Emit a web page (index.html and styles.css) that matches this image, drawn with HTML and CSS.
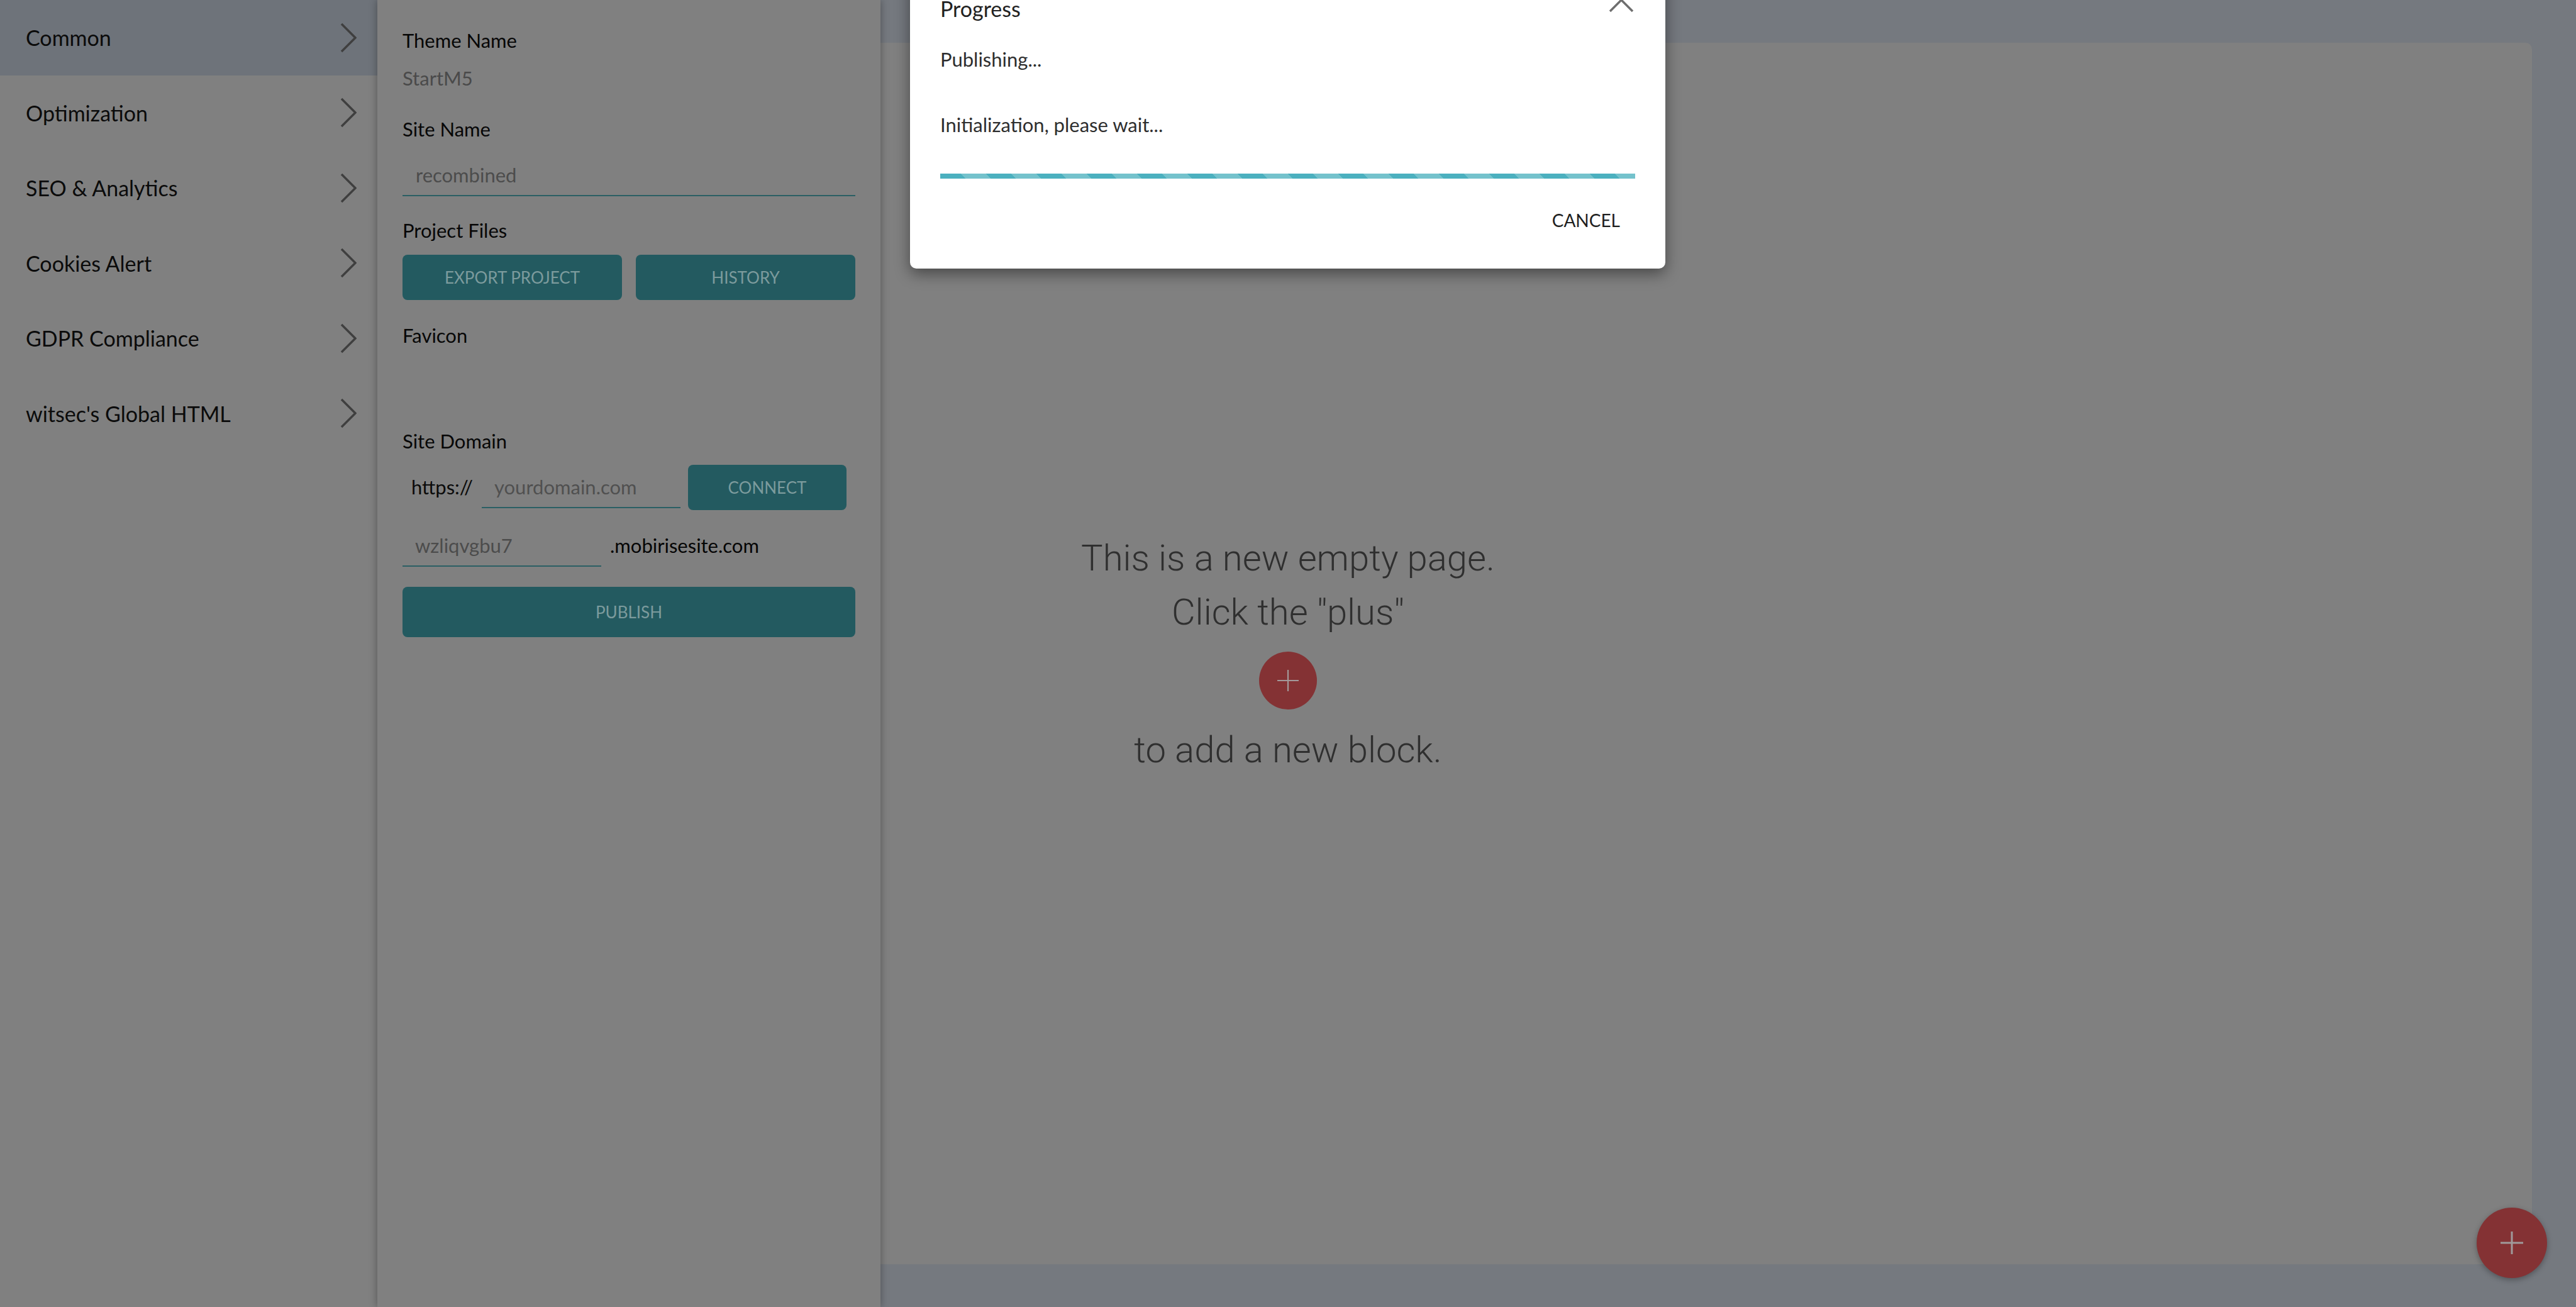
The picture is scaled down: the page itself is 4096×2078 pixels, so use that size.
FILE: index.html
```html
<!DOCTYPE html>
<html lang="en">
<head>
<meta charset="utf-8">
<title>Publishing</title>
<link rel="stylesheet" href="styles.css">
</head>
<body>
<main class="workspace">
  <section class="canvas">
    <div class="empty">
      <p class="empty-line">This is a new empty page.</p>
      <p class="empty-line">Click the "plus"</p>
      <button class="add-btn" type="button" aria-label="Add block">
        <svg viewBox="0 0 38 38" width="38" height="38"><path d="M19 2V36M2 19H36" stroke="#a3999a" stroke-width="2.2" fill="none"/></svg>
      </button>
      <p class="empty-line">to add a new block.</p>
    </div>
  </section>
</main>

<div class="drawers">
  <nav class="sidebar">
    <a class="nav-item active">Common<svg class="chev" viewBox="0 0 26 48" width="26" height="48"><path d="M2 2L24 24L2 46" stroke="#3f3f3f" stroke-width="3.5" fill="none"/></svg></a>
    <a class="nav-item">Optimization<svg class="chev" viewBox="0 0 26 48" width="26" height="48"><path d="M2 2L24 24L2 46" stroke="#3f3f3f" stroke-width="3.5" fill="none"/></svg></a>
    <a class="nav-item">SEO &amp; Analytics<svg class="chev" viewBox="0 0 26 48" width="26" height="48"><path d="M2 2L24 24L2 46" stroke="#3f3f3f" stroke-width="3.5" fill="none"/></svg></a>
    <a class="nav-item">Cookies Alert<svg class="chev" viewBox="0 0 26 48" width="26" height="48"><path d="M2 2L24 24L2 46" stroke="#3f3f3f" stroke-width="3.5" fill="none"/></svg></a>
    <a class="nav-item">GDPR Compliance<svg class="chev" viewBox="0 0 26 48" width="26" height="48"><path d="M2 2L24 24L2 46" stroke="#3f3f3f" stroke-width="3.5" fill="none"/></svg></a>
    <a class="nav-item">witsec's Global HTML<svg class="chev" viewBox="0 0 26 48" width="26" height="48"><path d="M2 2L24 24L2 46" stroke="#3f3f3f" stroke-width="3.5" fill="none"/></svg></a>
  </nav>

  <aside class="settings">
    <div class="label l-theme">Theme Name</div>
    <div class="value l-start">StartM5</div>
    <div class="label l-site">Site Name</div>
    <div class="field f-site">recombined</div>
    <div class="label l-files">Project Files</div>
    <div class="btn-pair">
      <button class="btn" type="button">Export Project</button>
      <button class="btn" type="button">History</button>
    </div>
    <div class="label l-favicon">Favicon</div>
    <div class="label l-domain">Site Domain</div>
    <div class="domain-row">
      <span class="proto">https://</span>
      <div class="field f-domain">yourdomain.com</div>
      <button class="btn btn-connect" type="button">Connect</button>
    </div>
    <div class="sub-row">
      <div class="field f-sub">wzliqvgbu7</div>
      <span class="suffix">.mobirisesite.com</span>
    </div>
    <button class="btn btn-publish" type="button">Publish</button>
  </aside>
</div>

<button class="fab" type="button" aria-label="Add block">
  <svg viewBox="0 0 38 38" width="38" height="38"><path d="M19 1V37M1 19H37" stroke="#a09a9a" stroke-width="3" fill="none"/></svg>
</button>

<div class="dialog" role="dialog">
  <svg class="close" viewBox="0 0 40 40" width="40" height="40"><path d="M2 2L38 38M38 2L2 38" stroke="#6e6e6e" stroke-width="3.5" fill="none"/></svg>
  <div class="d-title">Progress</div>
  <div class="d-text d-pub">Publishing...</div>
  <div class="d-text d-init">Initialization, please wait...</div>
  <div class="progress"></div>
  <div class="d-actions"><button class="d-cancel" type="button">Cancel</button></div>
</div>
</body>
</html>
```

FILE: styles.css
```css
* { box-sizing: border-box; }

html, body {
  margin: 0;
  padding: 0;
}

body {
  width: 4096px;
  height: 2078px;
  overflow: hidden;
  position: relative;
  background: #75797f;
  font-family: "Lato", "Liberation Sans", sans-serif;
}

p { margin: 0; }

button {
  font-family: inherit;
  border: 0;
  cursor: pointer;
}

/* ---------- workspace / canvas ---------- */
.workspace {
  height: 2078px;
  padding: 68px 70px 68px 70px;
}

.canvas {
  height: 100%;
  background: #808080;
  border-radius: 10px;
  display: flex;
  align-items: center;
  justify-content: center;
}

.empty {
  display: flex;
  flex-direction: column;
  align-items: center;
}

.empty-line {
  font-family: "Roboto", "Liberation Sans", sans-serif;
  font-weight: 300;
  font-size: 58px;
  line-height: 86px;
  color: #2f2f2f;
  white-space: nowrap;
}

.add-btn {
  width: 92px;
  height: 92px;
  margin: 20px 0 21px;
  border-radius: 50%;
  background: #843234;
  display: flex;
  align-items: center;
  justify-content: center;
  padding: 0;
}

/* ---------- drawers ---------- */
.drawers {
  position: absolute;
  left: 0;
  top: 0;
  height: 2078px;
  display: flex;
  z-index: 2;
}

.sidebar {
  width: 600px;
  height: 100%;
  background: #808080;
  box-shadow: 2px 0 8px rgba(0, 0, 0, 0.25);
  position: relative;
  z-index: 1;
}

.nav-item {
  height: 119.5px;
  display: flex;
  align-items: center;
  justify-content: space-between;
  padding: 0 33px 0 41px;
  font-size: 34px;
  color: #0b0b0b;
}

.nav-item.active {
  background: #6e737a;
}

.chev {
  display: block;
}

.settings {
  width: 800px;
  height: 100%;
  background: #808080;
  padding: 44px 40px 0 40px;
  box-shadow: 0 0 12px rgba(0, 0, 0, 0.35);
  position: relative;
  z-index: 2;
  font-size: 31px;
  line-height: 40px;
}

.label {
  color: #070707;
}

.value {
  color: #4a4a4a;
}

.l-start { margin-top: 20px; }
.l-site { margin-top: 41px; }
.f-site { margin-top: 33px; }
.l-files { margin-top: 34px; }
.btn-pair { margin-top: 19px; }
.l-favicon { margin-top: 36px; }
.l-domain { margin-top: 128px; }
.domain-row { margin-top: 18px; }
.sub-row { margin-top: 36px; }
.btn-publish { margin-top: 32px; }

.field {
  border-bottom: 2px solid #2b5f64;
  padding: 0 0 12px 21px;
  color: #4c4c4c;
  white-space: nowrap;
}

.btn-pair {
  display: grid;
  grid-template-columns: 1fr 1fr;
  gap: 22px;
}

.btn {
  height: 72px;
  border-radius: 8px;
  background: #235a60;
  color: #7c9b9d;
  font-size: 26px;
  text-transform: uppercase;
  display: flex;
  align-items: center;
  justify-content: center;
  padding: 0;
}

.domain-row {
  display: flex;
  align-items: flex-start;
  height: 72px;
}

.proto {
  flex: 0 0 126px;
  padding-left: 14px;
  margin-top: 15px;
  color: #0b0b0b;
}

.f-domain {
  flex: 0 0 316px;
  margin-top: 15px;
  padding-left: 20px;
  color: #505050;
}

.btn-connect {
  flex: 0 0 252px;
  margin-left: 12px;
}

.sub-row {
  display: flex;
  align-items: flex-start;
}

.f-sub {
  flex: 0 0 316px;
  padding-left: 20px;
}

.suffix {
  margin-left: 14px;
  color: #050505;
}

.btn-publish {
  width: 100%;
  height: 80px;
}

/* ---------- fab ---------- */
.fab {
  position: absolute;
  right: 46px;
  bottom: 46px;
  width: 112px;
  height: 112px;
  border-radius: 50%;
  background: #843234;
  box-shadow: 0 3px 10px rgba(0, 0, 0, 0.3);
  display: flex;
  align-items: center;
  justify-content: center;
  padding: 0;
  z-index: 3;
}

/* ---------- dialog ---------- */
.dialog {
  position: absolute;
  left: 1447px;
  top: -40px;
  width: 1201px;
  background: #ffffff;
  border-radius: 10px;
  padding: 34px 48px 57px 48px;
  box-shadow: 0 8px 24px rgba(0, 0, 0, 0.45);
  z-index: 5;
}

.close {
  position: absolute;
  top: 20px;
  right: 50px;
}

.d-title {
  font-size: 34px;
  line-height: 40px;
  color: #222222;
}

.d-text {
  font-size: 31px;
  line-height: 40px;
  color: #2e2e2e;
}

.d-pub { margin-top: 40px; }
.d-init { margin-top: 64px; }

.progress {
  margin-top: 58px;
  height: 8px;
  background: repeating-linear-gradient(45deg, #4bb0bf 0 28.3px, #74c2cc 28.3px 56.6px);
}

.d-actions {
  margin-top: 46px;
  display: flex;
  justify-content: flex-end;
}

.d-cancel {
  background: transparent;
  font-size: 28px;
  line-height: 40px;
  height: 40px;
  padding: 0 24px;
  color: #1e1e1e;
  text-transform: uppercase;
}
```
